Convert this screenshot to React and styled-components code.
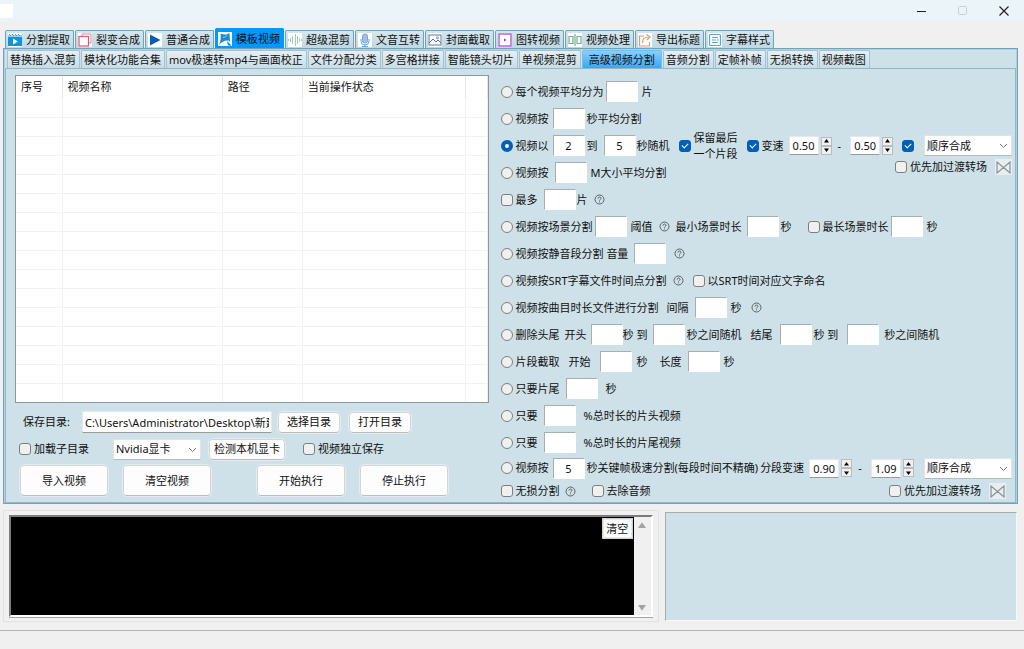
import React from 'react';
import styled, { createGlobalStyle, css } from 'styled-components';

const c = {
  window: '#f0f0f0',
  title: '#ebf5f9',
  panel: '#cee1e8',
  line: '#8fb8cc',
  lineDark: '#6ea3be',
  blue: '#0099ff',
  check: '#005fb8',
  text: '#101010',
};

const GlobalStyle = createGlobalStyle`
  *, *::before, *::after { box-sizing: border-box; }
  body {
    margin: 0;
    background: ${c.window};
    color: ${c.text};
  }
  body, button, input, select, textarea {
    font-family: "Noto Sans", "Noto Sans CJK SC", sans-serif;
    font-size: 11px;
    line-height: 16px;
  }
`;

/* ---------- window frame ---------- */

const TitleBar = styled.header`
  display: flex;
  align-items: center;
  justify-content: space-between;
  height: 21px;
  padding-right: 6px;
  background: ${c.title};
`;

const AppBadge = styled.span`
  width: 13px;
  height: 14px;
  background: #fff;
`;

const WindowButtons = styled.div`
  display: flex;
  gap: 13px;
`;

const WindowButton = styled.button`
  display: grid;
  place-items: center;
  width: 28px;
  height: 20px;
  padding: 0;
  border: 0;
  background: none;
  color: #222;
  &:disabled { color: #c6d0d3; }
`;

const Main = styled.main`
  padding: 7px 6px 0 3px;
`;

/* ---------- tabs ---------- */

const TabStrip = styled.nav`
  display: flex;
  align-items: flex-end;
  gap: 1px;
  height: ${p => (p.$sub ? 18 : 20)}px;
  padding-left: 2px;
`;

const Tab = styled.button`
  display: flex;
  align-items: center;
  gap: 4px;
  height: 18px;
  padding: 0 3px 0 2px;
  border: 1px solid ${c.lineDark};
  border-bottom: 0;
  border-radius: 2px 2px 0 0;
  background: linear-gradient(#d6e6ec, #bfd8e2);
  color: ${c.text};
  white-space: nowrap;
  ${p => p.$active && css`
    height: 20px;
    background: ${c.blue};
    border-color: ${c.blue};
  `}
`;

const SubTab = styled(Tab)`
  border-color: #a0c2d2;
  background: linear-gradient(#e6eff3, #c8dde6);
  ${p => p.$active && css`
    height: 18px;
    padding: 0 6px;
    border-color: #6fc0f5;
    background: linear-gradient(#8ccdfa, #35a8f8);
  `}
`;

const TabPanel = styled.section`
  padding: 1px 1px 0;
  border: 1px solid ${c.lineDark};
  box-shadow: inset 0 0 0 1px #b4d0dd;
  background: ${c.panel};
`;

const Workspace = styled.div`
  display: grid;
  grid-template-columns: minmax(0, 474fr) minmax(0, 512fr);
  gap: 12px;
  padding: 6px 3px 0 9px;
  border: 1px solid ${c.line};
`;

/* ---------- shared controls ---------- */

const gap = css`margin-left: ${p => p.$gap ?? 0}px;`;

const sunken = css`
  border: 1px solid #fff;
  border-top-color: #a6aeb2;
  border-left-color: #a6aeb2;
  background: #fff;
  color: ${c.text};
`;

const flat = css`
  border: 1px solid #e4e8ea;
  border-bottom-color: #9a9a9a;
  background: #fff;
  color: ${c.text};
`;

const Box = styled.input`
  appearance: none;
  flex: none;
  width: 12px;
  height: 12px;
  margin: 0;
  border: 1px solid #7c7f80;
  border-radius: 3px;
  background: #f0f0f0;
  &[type='radio'] { border-radius: 50%; }
  &[type='radio']:checked { border: 4px solid ${c.check}; background: #fff; }
  &[type='checkbox']:checked {
    display: grid;
    place-items: center;
    border-color: ${c.check};
    background: ${c.check};
  }
  &[type='checkbox']:checked::after {
    content: '';
    width: 6px;
    height: 4px;
    margin-bottom: 2px;
    border: solid #fff;
    border-width: 0 0 1px 1px;
    transform: rotate(-45deg);
  }
`;

const ChoiceLabel = styled.label`
  display: flex;
  align-items: center;
  gap: 3px;
  white-space: ${p => (p.$stacked ? 'pre' : 'nowrap')};
  ${gap}
`;

const Text = styled.span`
  white-space: nowrap;
  ${gap}
`;

const NumberBox = styled.input`
  flex: none;
  width: 32px;
  height: 21px;
  padding: 0;
  text-align: center;
  ${sunken}
  ${gap}
`;

const SpinField = styled.span`
  display: flex;
  align-items: center;
  gap: 2px;
  ${gap}
`;

const SpinInput = styled.input`
  width: 30px;
  height: 19px;
  padding: 0;
  text-align: center;
  ${flat}
`;

const SpinButtons = styled.span`
  display: flex;
  flex-direction: column;
`;

const SpinButton = styled.button`
  display: grid;
  place-items: center;
  width: 11px;
  height: 9px;
  padding: 0;
  border: 1px solid #b9bcbe;
  background: #f0f0f0;
  color: #000;
`;

const SelectWrap = styled.span`
  position: relative;
  display: flex;
  width: 88px;
  ${p => (p.$push ? css`margin-left: auto;` : gap)}
  svg {
    position: absolute;
    right: 4px;
    top: 8px;
    pointer-events: none;
  }
`;

const SelectBox = styled.select`
  appearance: none;
  width: 100%;
  height: 21px;
  padding: 0 2px;
  border: 1px solid #dde3e6;
  border-bottom-color: #b5babd;
  background: #fff;
  color: ${c.text};
`;

const HelpButton = styled.button`
  display: grid;
  place-items: center;
  width: 11px;
  height: 16px;
  padding: 0;
  border: 0;
  background: none;
  color: #5c6467;
  ${gap}
`;

const TransitionButton = styled.button`
  display: grid;
  place-items: center;
  width: 17px;
  height: 16px;
  margin-left: 8px;
  padding: 0;
  border: 0;
  background: #e9eef0;
  color: #8b9499;
`;

const PushButton = styled.button`
  height: ${p => (p.$large ? 31 : 21)}px;
  width: ${p => p.$width}px;
  padding: 0;
  border: 1px solid #d2d5d6;
  border-bottom-color: #b8bcbe;
  border-radius: 4px;
  outline: 1px solid #e6ecee;
  background: #fdfdfd;
  color: ${c.text};
  white-space: nowrap;
  ${gap}
`;

/* ---------- left side ---------- */

const Left = styled.div`
  display: flex;
  flex-direction: column;
  gap: 5px;
`;

const ListFrame = styled.div`
  height: 328px;
  margin-bottom: 3px;
  overflow: hidden;
  border: 1px solid #8c989e;
  background: #fff;
`;

const List = styled.table`
  width: 100%;
  table-layout: fixed;
  border-collapse: collapse;
  th {
    height: 22px;
    padding: 0 5px;
    border-right: 1px solid #e6e6e6;
    font-weight: 400;
    text-align: left;
  }
  td {
    height: 19px;
    padding: 0;
    border-right: 1px solid #f1f1f1;
    border-bottom: 1px solid #f1f1f1;
  }
  th:nth-child(1) { width: 46px; }
  th:nth-child(2) { width: 34%; }
  th:nth-child(3) { width: 17%; }
  th:nth-child(5) { width: 22px; }
`;

const Controls = styled.div`
  display: flex;
  align-items: center;
  min-height: 22px;
  padding-left: 4px;
`;

const PathInput = styled.input`
  flex: 0 1 190px;
  min-width: 0;
  height: 22px;
  padding: 0 2px;
  ${flat}
  ${gap}
`;

/* ---------- right side ---------- */

const Form = styled.form`
  padding-top: 3px;
`;

const Row = styled.div`
  display: flex;
  align-items: center;
  height: ${p => p.$height ?? 27}px;
`;

const RowEnd = styled.div`
  display: flex;
  align-items: center;
  align-self: ${p => (p.$top ? 'flex-start' : 'center')};
  margin-left: auto;
  padding-right: ${p => p.$inset ?? 0}px;
`;

/* ---------- bottom ---------- */

const Bottom = styled.div`
  display: grid;
  grid-template-columns: minmax(0, 655fr) minmax(0, 353fr);
  gap: 6px;
  margin-top: 6px;
`;

const LogGroup = styled.section`
  padding: 4px 5px;
  border: 1px solid #e2e2e2;
`;

const LogFrame = styled.div`
  position: relative;
  display: flex;
  height: 102px;
  border: 2px solid #fff;
  border-top-color: #7c7c7c;
  border-left-color: #7c7c7c;
  box-shadow: 0 1px 0 #a4a4a4;
`;

const Log = styled.textarea`
  flex: 1;
  min-width: 0;
  padding: 4px;
  border: 0;
  resize: none;
  overflow: hidden;
  background: #000;
  color: #fff;
`;

const ScrollRail = styled.div`
  display: flex;
  flex-direction: column;
  justify-content: space-between;
  width: 17px;
  background: #f0f0f0;
`;

const ScrollButton = styled.button`
  display: grid;
  place-items: center;
  height: 16px;
  padding: 0;
  border: 0;
  background: none;
  color: #a3a3a3;
`;

const ClearButton = styled.button`
  position: absolute;
  top: 1px;
  right: 18px;
  width: 31px;
  height: 21px;
  padding: 0;
  border: 1px solid #d0d0d0;
  outline: 1px solid #e8e8e8;
  outline-offset: -2px;
  background: #fdfdfd;
  color: ${c.text};
`;

const Preview = styled.section`
  margin: 2px 1px 1px 0;
  border: 1px solid #f8f8f8;
  border-top-color: #a4acb0;
  border-left-color: #a4acb0;
  background: ${c.panel};
`;

const StatusBar = styled.footer`
  height: 21px;
  margin-top: 8px;
  border-top: 1px solid #b4b4b4;
`;

/* ---------- drawings ---------- */

const IconSvg = styled.svg`
  display: block;
  flex: none;
  background: #fdfeff;
`;

const TabIcon = ({ name }) => (
  <IconSvg width="14" height="14" viewBox="0 0 14 14" fill="none" aria-hidden="true">
    {name === 'split' && (
      <>
        <path d="M0 4h14v9H0z" fill="#1591d8" />
        <path d="M1 1l2 2M4 1l2 2M7 1l2 2M10 1l2 2M0 3h14" stroke="#3aa5e0" />
        <path d="M5 5.500l5 3-5 3z" fill="#fff" />
      </>
    )}
    {name === 'stack' && (
      <>
        <path d="M4 3.500V1h9v9h-2.500" stroke="#e58a97" />
        <rect x="1" y="3.500" width="9.500" height="9.500" stroke="#d7596b" strokeWidth="1.200" />
      </>
    )}
    {name === 'play' && <path d="M2 1.500L12.500 7 2 12.500z" fill="#0b5cb5" />}
    {name === 'template' && (
      <>
        <path d="M2.500 1.500c3 1.500 6 1.500 9-.5l.5 9-1.500-1.500C7 8 4 9.500 1 13 3 9 3 5 2.500 1.500z" fill="#188bd0" />
        <path d="M5 5.500c2-.2 3-1 4.500-2.500M9 10l4 3.500" stroke="#8fd0f2" />
        <path d="M9 9l4.500 4.500H10z" fill="#188bd0" />
      </>
    )}
    {name === 'wave' && (
      <path d="M.5 6v2M2.500 5v4M4.500 3v8M7.500 1v12M9.500 3v8M11.500 5v4M13.500 6v2" stroke="#9dcbb4" />
    )}
    {name === 'mic' && (
      <>
        <path d="M3 6v2a4 4 0 008 0V6M7 12v2M4 13.500h6" stroke="#58a9dd" />
        <rect x="4.500" y="1" width="5" height="9" rx="2.500" fill="#a9bdea" stroke="#7a9ddd" />
      </>
    )}
    {name === 'image' && (
      <>
        <rect x="1" y="2" width="12" height="10" stroke="#6671a6" />
        <path d="M1 10l4-4 3 3 2-2 3 3" stroke="#6671a6" />
        <circle cx="9.500" cy="4.800" r="1" stroke="#6671a6" strokeWidth=".8" />
      </>
    )}
    {name === 'frame' && (
      <>
        <rect x="1" y="1" width="12" height="12" stroke="#b457d6" strokeWidth="1.400" />
        <path d="M6 5.500L8.500 7 6 8.500z" fill="#8c3fc0" />
      </>
    )}
    {name === 'process' && (
      <path d="M7 1v12M5 3.500H1v7h4zM9 3.500h4v7H9z" stroke="#76b08d" strokeWidth="1.200" />
    )}
    {name === 'export' && (
      <path d="M6 3H1.500v10h10V9M4.500 10c0-4 2-6 6-6M8.500 1.500L12 4 9 7" stroke="#e0987a" strokeWidth="1.200" />
    )}
    {name === 'subtitle' && (
      <>
        <rect x="1.500" y="1.500" width="11" height="11" rx="1" stroke="#58a9d0" strokeWidth="1.200" />
        <path d="M4 4.500h6M4 7h4M9 7h2M4 9.500h6" stroke="#58a9d0" />
      </>
    )}
  </IconSvg>
);

const HelpIcon = () => (
  <svg width="11" height="11" viewBox="0 0 11 11" fill="none" stroke="currentColor" aria-hidden="true">
    <circle cx="5.500" cy="5.500" r="4.500" />
    <path d="M4 4.600c0-2.200 3-2 3-.2 0 1.100-1.500 1-1.500 2.100M5.500 7.400v1" />
  </svg>
);

const Triangle = ({ down, size = 5 }) => (
  <svg width={size} height={size - 1} viewBox="0 0 10 8" aria-hidden="true">
    <path d={down ? 'M0 1h10L5 8z' : 'M0 7h10L5 0z'} fill="currentColor" />
  </svg>
);

/* ---------- composed parts ---------- */

const Choice = ({ type = 'radio', gap: g, checked, children, stacked, label }) => (
  <ChoiceLabel $gap={g} $stacked={stacked}>
    <Box
      type={type}
      name={type === 'radio' ? 'splitMode' : undefined}
      defaultChecked={checked}
      aria-label={label}
    />
    {children && <span>{children}</span>}
  </ChoiceLabel>
);

const Check = props => <Choice type="checkbox" {...props} />;

const Num = ({ gap: g = 4, value = '', label = '数值' }) => (
  <NumberBox $gap={g} defaultValue={value} aria-label={label} />
);

const Help = ({ gap: g = 8 }) => (
  <HelpButton type="button" $gap={g} aria-label="帮助">
    <HelpIcon />
  </HelpButton>
);

const Spin = ({ gap: g, value, label }) => (
  <SpinField $gap={g}>
    <SpinInput defaultValue={value} aria-label={label} />
    <SpinButtons>
      <SpinButton type="button" aria-label="增加"><Triangle /></SpinButton>
      <SpinButton type="button" aria-label="减少"><Triangle down /></SpinButton>
    </SpinButtons>
  </SpinField>
);

const Select = ({ option, label, ...rest }) => (
  <SelectWrap {...rest}>
    <SelectBox aria-label={label}>
      <option>{option}</option>
    </SelectBox>
    <svg width="9" height="6" viewBox="0 0 9 6" fill="none" stroke="#777" aria-hidden="true">
      <path d="M1 1l3.500 3.500L8 1" />
    </svg>
  </SelectWrap>
);

const Transition = ({ inset, top }) => (
  <RowEnd $inset={inset} $top={top}>
    <Check>优先加过渡转场</Check>
    <TransitionButton type="button" aria-label="选择转场">
      <svg width="15" height="13" viewBox="0 0 15 13" fill="none" stroke="currentColor" strokeWidth="1.200" aria-hidden="true">
        <path d="M1 1v11l6.500-5.500zM14 1v11L7.500 6.500z" />
      </svg>
    </TransitionButton>
  </RowEnd>
);

const tabs = [
  ['分割提取', 'split'], ['裂变合成', 'stack'], ['普通合成', 'play'], ['模板视频', 'template'],
  ['超级混剪', 'wave'], ['文音互转', 'mic'], ['封面截取', 'image'], ['图转视频', 'frame'],
  ['视频处理', 'process'], ['导出标题', 'export'], ['字幕样式', 'subtitle'],
];

const subTabs = [
  '替换插入混剪', '模块化功能合集', 'mov极速转mp4与画面校正', '文件分配分类', '多宫格拼接', '智能镜头切片',
  '单视频混剪', '高级视频分割', '音频分割', '定帧补帧', '无损转换', '视频截图',
];

const emptyRows = Array.from({ length: 16 }, (_, i) => i);

const VideoList = () => (
  <ListFrame>
    <List>
      <thead>
        <tr>
          <th>序号</th>
          <th>视频名称</th>
          <th>路径</th>
          <th>当前操作状态</th>
          <th aria-label="空列" />
        </tr>
      </thead>
      <tbody>
        {emptyRows.map(i => (
          <tr key={i}><td /><td /><td /><td /><td /></tr>
        ))}
      </tbody>
    </List>
  </ListFrame>
);

const SplitForm = () => (
  <Form onSubmit={e => e.preventDefault()}>
    <Row><Choice>每个视频平均分为</Choice><Num gap={2} /><Text $gap={4}>片</Text></Row>
    <Row><Choice>视频按</Choice><Num /><Text $gap={2}>秒平均分割</Text></Row>
    <Row>
      <Choice checked>视频以</Choice><Num value="2" /><Text $gap={2}>到</Text>
      <Num gap={6} value="5" /><Text $gap={1}>秒随机</Text>
      <Check checked stacked gap={9}>{'保留最后\n一个片段'}</Check>
      <Check checked gap={9}>变速</Check>
      <Spin gap={5} value="0.50" label="最小变速" />
      <Text $gap={6}>-</Text>
      <Spin gap={9} value="0.50" label="最大变速" />
      <Check checked gap={9} label="启用合成顺序" />
      <Select $push option="顺序合成" label="合成顺序" />
    </Row>
    <Row>
      <Choice>视频按</Choice><Num gap={6} /><Text $gap={4}>M大小平均分割</Text>
      <Transition top />
    </Row>
    <Row><Check>最多</Check><Num gap={6} /><Text $gap={1}>片</Text><Help gap={6} /></Row>
    <Row>
      <Choice>视频按场景分割</Choice><Num gap={2} /><Text $gap={4}>阈值</Text><Help gap={6} />
      <Text $gap={6}>最小场景时长</Text><Num gap={5} /><Text $gap={2}>秒</Text>
      <Check gap={16}>最长场景时长</Check><Num gap={2} /><Text $gap={4}>秒</Text>
    </Row>
    <Row><Choice>视频按静音段分割 音量</Choice><Num gap={6} /><Help /></Row>
    <Row>
      <Choice>视频按SRT字幕文件时间点分割</Choice><Help gap={6} />
      <Check gap={9}>以SRT时间对应文字命名</Check>
    </Row>
    <Row>
      <Choice>视频按曲目时长文件进行分割</Choice><Text $gap={8}>间隔</Text><Num gap={6} />
      <Text $gap={4}>秒</Text><Help gap={9} />
    </Row>
    <Row>
      <Choice>删除头尾</Choice><Text $gap={5}>开头</Text><Num gap={4} /><Text>秒 到</Text>
      <Num gap={6} /><Text $gap={1}>秒之间随机</Text>
      <Text $gap={9}>结尾</Text><Num gap={8} /><Text $gap={1}>秒 到</Text>
      <Num gap={9} /><Text $gap={5}>秒之间随机</Text>
    </Row>
    <Row>
      <Choice>片段截取</Choice><Text $gap={9}>开始</Text><Num gap={9} /><Text $gap={5}>秒</Text>
      <Text $gap={12}>长度</Text><Num gap={6} /><Text $gap={4}>秒</Text>
    </Row>
    <Row><Choice>只要片尾</Choice><Num gap={6} /><Text $gap={8}>秒</Text></Row>
    <Row><Choice>只要</Choice><Num gap={6} /><Text $gap={8}>%总时长的片头视频</Text></Row>
    <Row><Choice>只要</Choice><Num gap={6} /><Text $gap={8}>%总时长的片尾视频</Text></Row>
    <Row $height={24}>
      <Choice>视频按</Choice><Num value="5" /><Text $gap={2}>秒关键帧极速分割(每段时间不精确)</Text>
      <Text $gap={2}>分段变速</Text>
      <Spin gap={5} value="0.90" label="分段最小变速" />
      <Text $gap={6}>-</Text>
      <Spin gap={9} value="1.09" label="分段最大变速" />
      <Select $push option="顺序合成" label="分段合成顺序" />
    </Row>
    <Row $height={22}>
      <Check>无损分割</Check><Help gap={5} /><Check gap={16}>去除音频</Check>
      <Transition inset={6} />
    </Row>
  </Form>
);

export default function App() {
  return (
    <>
      <GlobalStyle />
      <TitleBar>
        <AppBadge />
        <WindowButtons>
          <WindowButton type="button" aria-label="最小化">
            <svg width="10" height="10" stroke="currentColor"><path d="M0 5.500h9" /></svg>
          </WindowButton>
          <WindowButton type="button" disabled aria-label="最大化">
            <svg width="10" height="10" fill="none" stroke="currentColor"><rect x=".5" y=".5" width="8" height="8" rx="1" /></svg>
          </WindowButton>
          <WindowButton type="button" aria-label="关闭">
            <svg width="10" height="10" stroke="currentColor" strokeWidth="1.200"><path d="M.5.5l9 9M9.500.5l-9 9" /></svg>
          </WindowButton>
        </WindowButtons>
      </TitleBar>
      <Main>
        <TabStrip>
          {tabs.map(([label, icon]) => (
            <Tab key={label} type="button" $active={icon === 'template'}>
              <TabIcon name={icon} />
              {label}
            </Tab>
          ))}
        </TabStrip>
        <TabPanel>
          <TabStrip $sub>
            {subTabs.map(label => (
              <SubTab key={label} type="button" $active={label === '高级视频分割'}>{label}</SubTab>
            ))}
          </TabStrip>
          <Workspace>
            <Left>
              <VideoList />
              <Controls>
                <Text as="label" htmlFor="save-path" $gap={4}>保存目录:</Text>
                <PathInput id="save-path" $gap={12} defaultValue="C:\Users\Administrator\Desktop\新建文件夹" />
                <PushButton type="button" $gap={6} $width={62}>选择目录</PushButton>
                <PushButton type="button" $gap={9} $width={62}>打开目录</PushButton>
              </Controls>
              <Controls>
                <Check>加载子目录</Check>
                <Select $gap={24} option="Nvidia显卡" label="显卡" />
                <PushButton type="button" $gap={8} $width={76}>检测本机显卡</PushButton>
                <Check gap={18}>视频独立保存</Check>
              </Controls>
              <Controls>
                <PushButton type="button" $gap={1} $large $width={88}>导入视频</PushButton>
                <PushButton type="button" $gap={15} $large $width={88}>清空视频</PushButton>
                <PushButton type="button" $gap={46} $large $width={88}>开始执行</PushButton>
                <PushButton type="button" $gap={15} $large $width={88}>停止执行</PushButton>
              </Controls>
            </Left>
            <SplitForm />
          </Workspace>
        </TabPanel>
        <Bottom>
          <LogGroup>
            <LogFrame>
              <Log readOnly aria-label="日志" />
              <ScrollRail>
                <ScrollButton type="button" aria-label="向上滚动"><Triangle size={8} /></ScrollButton>
                <ScrollButton type="button" aria-label="向下滚动"><Triangle size={8} down /></ScrollButton>
              </ScrollRail>
              <ClearButton type="button">清空</ClearButton>
            </LogFrame>
          </LogGroup>
          <Preview aria-label="预览" />
        </Bottom>
      </Main>
      <StatusBar />
    </>
  );
}
